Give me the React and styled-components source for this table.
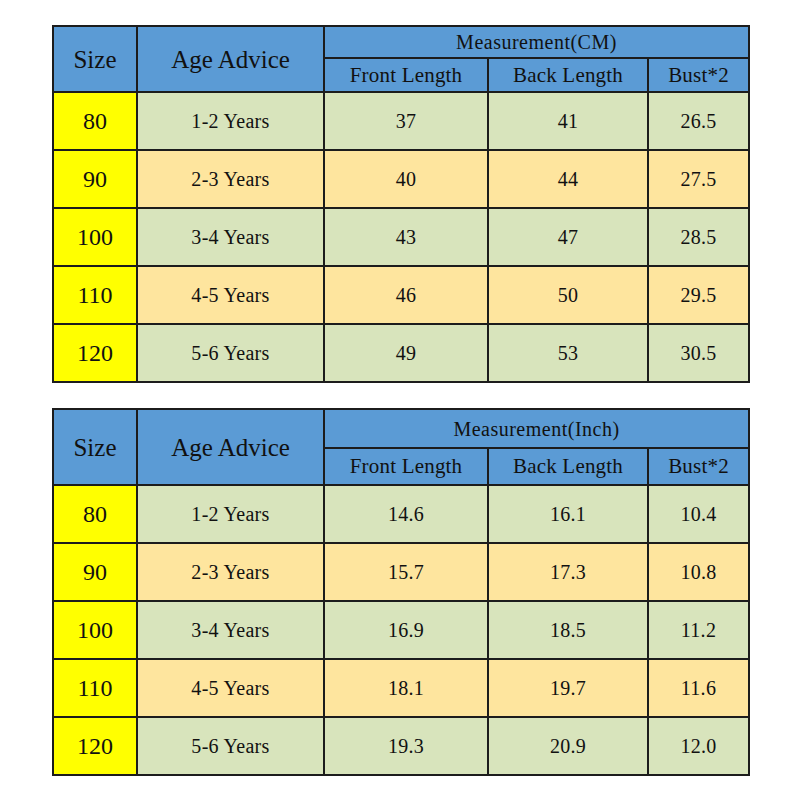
import React from "react";
import styled, { createGlobalStyle } from "styled-components";

const Global = createGlobalStyle`
  html, body { margin: 0; padding: 0; background: #ffffff; }
  body { font-family: "Liberation Serif", "Times New Roman", serif; color: #111; }
`;

const Page = styled.div`
  width: 800px;
  height: 800px;
  box-sizing: border-box;
  padding: 25px 0 0 52px;
  display: flex;
  flex-direction: column;
  gap: 25px;
`;

const Table = styled.div`
  display: grid;
  width: 698px;
  box-sizing: border-box;
  grid-template-columns: 82px 185px 162px 158px 99px;
  grid-template-rows: ${(p) => p.$rows};
  gap: 2px;
  padding: 2px;
  background: #1c1c1c;
`;

const bg = {
  blue: "#5b9bd5",
  yellow: "#ffff00",
  green: "#d8e4bc",
  peach: "#fee59e",
};

const Cell = styled.div`
  display: flex;
  align-items: center;
  justify-content: center;
  background: ${(p) => bg[p.$tone]};
  font-size: ${(p) => p.$size}px;
  letter-spacing: ${(p) => p.$track || 0}px;
  line-height: 1;
  white-space: nowrap;
  ${(p) => (p.$rowSpan ? `grid-row: span ${p.$rowSpan};` : "")}
  ${(p) => (p.$colSpan ? `grid-column: span ${p.$colSpan};` : "")}
`;

const tables = [
  {
    unit: "CM",
    rows: "30px 32px repeat(5, 56px)",
    data: [
      ["80", "1-2 Years", "37", "41", "26.5"],
      ["90", "2-3 Years", "40", "44", "27.5"],
      ["100", "3-4 Years", "43", "47", "28.5"],
      ["110", "4-5 Years", "46", "50", "29.5"],
      ["120", "5-6 Years", "49", "53", "30.5"],
    ],
  },
  {
    unit: "Inch",
    rows: "37px 35px repeat(5, 56px)",
    data: [
      ["80", "1-2 Years", "14.6", "16.1", "10.4"],
      ["90", "2-3 Years", "15.7", "17.3", "10.8"],
      ["100", "3-4 Years", "16.9", "18.5", "11.2"],
      ["110", "4-5 Years", "18.1", "19.7", "11.6"],
      ["120", "5-6 Years", "19.3", "20.9", "12.0"],
    ],
  },
];

function SizeTable({ unit, rows, data }) {
  return (
    <Table $rows={rows}>
      <Cell $tone="blue" $size={25} $rowSpan={2}>Size</Cell>
      <Cell $tone="blue" $size={25} $rowSpan={2}>Age Advice</Cell>
      <Cell $tone="blue" $size={20} $track={0.5} $colSpan={3}>Measurement({unit})</Cell>
      <Cell $tone="blue" $size={21} $track={0.2}>Front Length</Cell>
      <Cell $tone="blue" $size={21} $track={0.2}>Back Length</Cell>
      <Cell $tone="blue" $size={21} $track={0.2}>Bust*2</Cell>
      {data.map((r, i) => {
        const tone = i % 2 === 0 ? "green" : "peach";
        return (
          <React.Fragment key={r[0]}>
            <Cell $tone="yellow" $size={24}>{r[0]}</Cell>
            <Cell $tone={tone} $size={20} $track={0.3}>{r[1]}</Cell>
            <Cell $tone={tone} $size={20} $track={0.3}>{r[2]}</Cell>
            <Cell $tone={tone} $size={20} $track={0.3}>{r[3]}</Cell>
            <Cell $tone={tone} $size={20} $track={0.3}>{r[4]}</Cell>
          </React.Fragment>
        );
      })}
    </Table>
  );
}

export default function App() {
  return (
    <>
      <Global />
      <Page>
        {tables.map((t) => (
          <SizeTable key={t.unit} {...t} />
        ))}
      </Page>
    </>
  );
}
